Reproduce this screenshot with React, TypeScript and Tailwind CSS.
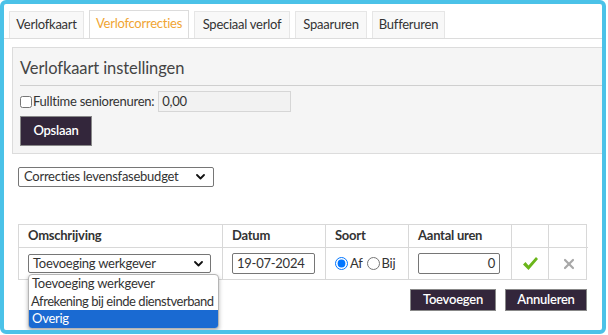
import React from "react";

const font = { fontFamily: "Lato, 'Open Sans', sans-serif" };

function Chevron() {
  return (
    <svg width="9" height="6" viewBox="0 0 9 6" fill="none" stroke="#111" strokeWidth="1.8" strokeLinecap="round" strokeLinejoin="round">
      <polyline points="1 1 4.5 4.5 8 1" />
    </svg>
  );
}

const tabs = [
  { label: "Verlofkaart", w: "w-[75px]" },
  { label: "Verlofcorrecties", w: "w-[100px]" },
  { label: "Speciaal verlof", w: "w-[96px]" },
  { label: "Spaaruren", w: "w-[72px]" },
  { label: "Bufferuren", w: "w-[73px]" },
];

export default function App() {
  return (
    <div className="w-[608px] h-[335px] bg-white text-[13px] text-[#333] tracking-[-0.25px]" style={font}>
      <div className="w-[606px] h-[334px] border-[4px] border-[#4bc2e8] rounded-[6px] overflow-hidden relative">
        {/* Tabs */}
        <div className="flex gap-[5px] pl-[5px] pt-[7px] border-b border-[#dcdcdc] h-[35px]">
          {tabs.map((t, i) =>
            i === 1 ? (
              <div key={t.label} className={`${t.w} h-[28px] -mt-[1px] flex items-center justify-center border border-b-0 border-[#dcdcdc] bg-white text-[#f0a533] -mb-[1px] pb-[1px]`}>
                {t.label}
              </div>
            ) : (
              <div key={t.label} className={`${t.w} h-[27px] flex items-center justify-center border border-b-0 border-[#e6e6e6] bg-[#f8f8f8]`}>
                {t.label}
              </div>
            )
          )}
        </div>

        {/* Settings panel */}
        <div className="ml-[8px] mt-[8px] h-[107px] bg-[#f5f5f5] border border-r-0 border-[#dcdcdc] pl-[7px]">
          <div className="h-[38px] flex items-end pb-[4px] border-b border-[#cfcfcf] text-[16.5px] text-[#444] tracking-[-0.1px]">Verlofkaart instellingen</div>
          <div className="flex items-center mt-[5px] h-[21px]">
            <input type="checkbox" className="w-[12px] h-[12px] m-0 mr-[1px]" />
            <span>Fulltime seniorenuren:</span>
            <div className="ml-[4px] w-[133px] h-[21px] border border-[#d6d6d6] bg-[#f2f2f2] flex items-center px-[3px]">0,00</div>
          </div>
          <div className="mt-[4px] w-[72px] h-[30px] bg-[#33263b] text-white flex items-center justify-center font-semibold text-[13px] border border-[#888]">
            Opslaan
          </div>
        </div>

        {/* Type select */}
        <div className="ml-[14px] mt-[13px] w-[196px] h-[20px] border border-[#767676] rounded-[2px] flex items-center justify-between pl-[5px] pr-[8px]">
          <span>Correcties levensfasebudget</span>
          <Chevron />
        </div>

        {/* Corrections table */}
        <div className="ml-[14px] mt-[37px] w-[569px]">
          <div className="grid grid-cols-[204px_103px_83px_103px_37px_39px] border border-[#d8d8d8]">
            <div className="h-[22px] px-[9px] flex items-center font-bold border-r border-[#d8d8d8]">Omschrijving</div>
            <div className="h-[22px] px-[9px] flex items-center font-bold border-r border-[#d8d8d8]">Datum</div>
            <div className="h-[22px] px-[9px] flex items-center font-bold border-r border-[#d8d8d8]">Soort</div>
            <div className="h-[22px] px-[9px] flex items-center font-bold border-r border-[#d8d8d8]">Aantal uren</div>
            <div className="h-[22px] border-r border-[#d8d8d8]" />
            <div className="h-[22px]" />

            <div className="h-[32px] px-[9px] flex items-center border-r border-t border-[#d8d8d8] relative">
              <div className="w-[183px] h-[19px] border border-[#767676] rounded-[2px] flex items-center justify-between pl-[4px] pr-[7px]">
                <span>Toevoeging werkgever</span>
                <Chevron />
              </div>
              <div className="absolute left-[9px] top-[26px] w-[191px] bg-white border border-[#b5b5b5] rounded-[4px] shadow-[0_2px_4px_rgba(0,0,0,0.3)] overflow-hidden z-10 leading-[17.5px]">
                <div className="pl-[3px]">Toevoeging werkgever</div>
                <div className="pl-[2px] whitespace-nowrap tracking-[-0.45px]">Afrekening bij einde dienstverband</div>
                <div className="pl-[3px] bg-[#1a6ad2] text-white">Overig</div>
              </div>
            </div>
            <div className="h-[32px] px-[9px] flex items-center border-r border-t border-[#d8d8d8]">
              <div className="w-[83px] h-[21px] border border-[#767676] rounded-[2px] flex items-center px-[4px]">19-07-2024</div>
            </div>
            <div className="h-[32px] pl-[9px] flex items-center border-r border-t border-[#d8d8d8]">
              <input type="radio" name="soort" defaultChecked className="w-[13px] h-[13px] m-0" />
              <span className="ml-[2px] mr-[4px]">Af</span>
              <input type="radio" name="soort" className="w-[13px] h-[13px] m-0" />
              <span className="ml-[2px]">Bij</span>
            </div>
            <div className="h-[32px] px-[9px] flex items-center border-r border-t border-[#d8d8d8]">
              <div className="w-[82px] h-[21px] border border-[#767676] rounded-[2px] flex items-center justify-end px-[4px]">0</div>
            </div>
            <div className="h-[32px] flex items-center justify-center border-r border-t border-[#d8d8d8]">
              <svg width="17" height="15" viewBox="0 0 17 15">
                <path d="M1 8.5 L3.5 6 L6.5 9.5 L14 1 L16 3 L6.5 14 Z" fill="#6bb61b" />
              </svg>
            </div>
            <div className="h-[32px] flex items-center justify-center border-t border-[#d8d8d8]">
              <svg width="12" height="12" viewBox="0 0 12 12" stroke="#a8a8a8" strokeWidth="2.2" strokeLinecap="round">
                <line x1="2" y1="2" x2="10" y2="10" />
                <line x1="10" y1="2" x2="2" y2="10" />
              </svg>
            </div>
          </div>

          <div className="flex justify-end gap-[9px] mt-[9px]">
            <div className="w-[86px] h-[22px] bg-[#33263b] text-white flex items-center justify-center font-semibold border border-[#888]">Toevoegen</div>
            <div className="w-[82px] h-[22px] bg-[#33263b] text-white flex items-center justify-center font-semibold border border-[#888]">Annuleren</div>
          </div>
        </div>
      </div>
    </div>
  );
}
